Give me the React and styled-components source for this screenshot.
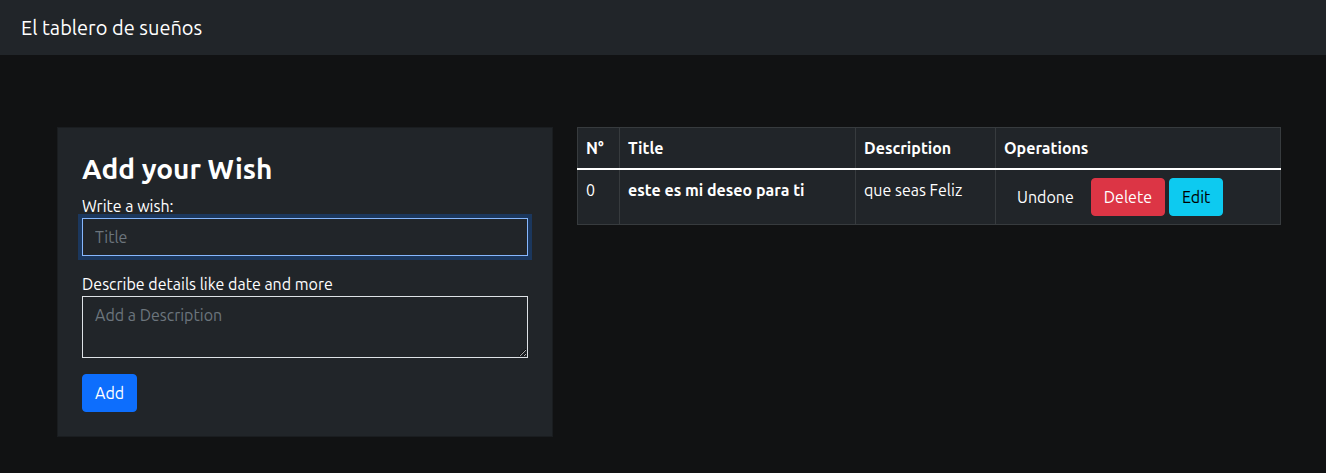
import React from 'react';
import styled, { createGlobalStyle } from 'styled-components';

const GlobalStyle = createGlobalStyle`
  body {
    margin: 0;
    background: #111213;
    color: #dee2e6;
    font-family: Ubuntu, "Noto Sans", "Open Sans", sans-serif;
    font-size: 16px;
    line-height: 1.5;
  }
  * { box-sizing: border-box; }
`;

const Navbar = styled.nav`
  height: 55px;
  background: #212529;
  display: flex;
  align-items: center;
  padding: 0 21px;
`;

const Brand = styled.span`
  font-size: 20px;
  color: #fff;
`;

const Main = styled.main`
  display: flex;
  align-items: flex-start;
  gap: 24px;
  padding: 72px 0 0 57px;
`;

const Card = styled.section`
  width: 496px;
  background: #212529;
  border: 1px solid #1a1d20;
  padding: 24px;
`;

const Heading = styled.h2`
  margin: 0 0 8px;
  font-size: 28px;
  font-weight: 600;
  line-height: 1.2;
  color: #fff;
`;

const Label = styled.label`
  display: block;
  margin: 0;
  color: #fff;
`;

const Field = styled.div`
  margin-bottom: 16px;
`;

const Input = styled.input`
  display: block;
  width: 100%;
  height: 38px;
  padding: 6px 12px;
  font: inherit;
  color: #dee2e6;
  background: #212529;
  border: 1px solid ${({ $focus }) => ($focus ? '#86b7fe' : '#dee2e6')};
  box-shadow: ${({ $focus }) => ($focus ? '0 0 0 4px rgba(13,110,253,0.25)' : 'none')};
  border-radius: 0;
  outline: none;
  &::placeholder { color: #6c757d; }
`;

const TextArea = styled.textarea`
  display: block;
  width: 100%;
  height: 62px;
  padding: 6px 12px;
  font: inherit;
  color: #dee2e6;
  background: #212529;
  border: 1px solid #dee2e6;
  border-radius: 0;
  resize: vertical;
  outline: none;
  &::placeholder { color: #6c757d; }
`;

const Button = styled.button`
  font-family: inherit;
  font-size: 16px;
  line-height: 24px;
  padding: 6px 12px;
  border-radius: 4px;
  border: 1px solid ${({ $bg }) => $bg || 'transparent'};
  background: ${({ $bg }) => $bg || 'transparent'};
  color: ${({ $color }) => $color || '#fff'};
  cursor: pointer;
`;

const Table = styled.table`
  width: 704px;
  border-collapse: collapse;
  background: #212529;
  color: #fff;
`;

const Th = styled.th`
  text-align: left;
  font-weight: 700;
  padding: 8px;
  border: 1px solid #373b3e;
  border-bottom: 2px solid #fff;
  width: ${({ $w }) => $w};
`;

const Td = styled.td`
  padding: 8px;
  vertical-align: top;
  border: 1px solid #373b3e;
  font-weight: ${({ $bold }) => ($bold ? 700 : 400)};
  line-height: 24px;
`;

const Ops = styled.div`
  display: flex;
  align-items: center;
  gap: 4px;
`;

const wishes = [{ title: 'este es mi deseo para ti', description: 'que seas Feliz', done: false }];

export default function App() {
  return (
    <>
      <GlobalStyle />
      <Navbar>
        <Brand>El tablero de sueños</Brand>
      </Navbar>
      <Main>
        <Card>
          <Heading>Add your Wish</Heading>
          <Field>
            <Label>Write a wish:</Label>
            <Input $focus placeholder="Title" />
          </Field>
          <Field>
            <Label>Describe details like date and more</Label>
            <TextArea placeholder="Add a Description" />
          </Field>
          <Button $bg="#0d6efd">Add</Button>
        </Card>
        <Table>
          <thead>
            <tr>
              <Th $w="42px">N°</Th>
              <Th $w="236px">Title</Th>
              <Th $w="140px">Description</Th>
              <Th>Operations</Th>
            </tr>
          </thead>
          <tbody>
            {wishes.map((w, i) => (
              <tr key={i}>
                <Td>{i}</Td>
                <Td $bold>{w.title}</Td>
                <Td>{w.description}</Td>
                <Td>
                  <Ops>
                    <Button>{w.done ? 'Done' : 'Undone'}</Button>
                    <Button $bg="#dc3545">Delete</Button>
                    <Button $bg="#0dcaf0" $color="#000">Edit</Button>
                  </Ops>
                </Td>
              </tr>
            ))}
          </tbody>
        </Table>
      </Main>
    </>
  );
}
